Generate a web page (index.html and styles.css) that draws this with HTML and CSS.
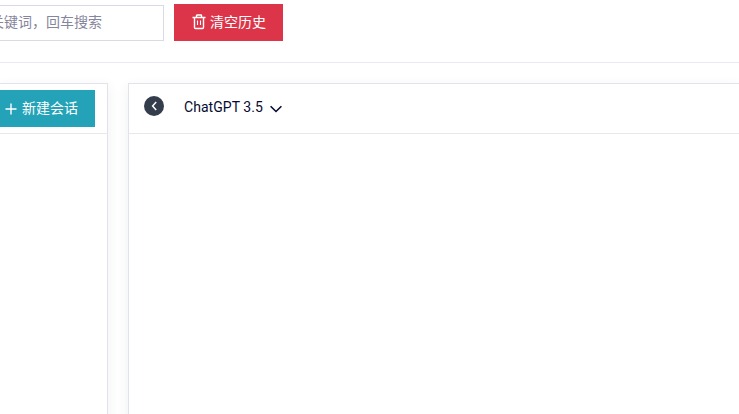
FILE: index.html
```
<!DOCTYPE html>
<html lang="zh-CN">
<head>
<meta charset="utf-8">
<title>ChatGPT</title>
<link rel="stylesheet" href="styles.css">
</head>
<body>
<header class="toolbar">
  <div class="search"><span class="placeholder">关键词，回车搜索</span></div>
  <button class="btn btn-danger">
    <svg class="icon-trash" viewBox="0 0 14 16" fill="none" stroke="currentColor"><path d="M.5 3.5h13M4.5 3.3V1.5q0-.5.5-.5h4q.5 0 .5.5v1.8M2.5 4v9.5q0 1 1 1h7q1 0 1-1V4" stroke-width="1.4"/><path d="M5.5 6.5V11M8.5 6.5V11" stroke-width="1.1"/></svg>
    <span>清空历史</span>
  </button>
</header>
<main class="content">
  <section class="panel sessions">
    <div class="panel-header">
      <button class="btn btn-info">
        <svg class="icon-plus" viewBox="0 0 12 12" fill="none" stroke="currentColor"><path d="M6 .5v11M.5 6h11" stroke-width="1.4"/></svg>
        <span>新建会话</span>
      </button>
    </div>
  </section>
  <section class="panel chat">
    <div class="panel-header">
      <svg class="icon-back" viewBox="0 0 20 20" fill="none"><circle cx="10" cy="10" r="10" fill="#343d4c"/><path d="M12.2 6 8.6 10l3.6 4" stroke="#fff" stroke-width="1.5"/></svg>
      <span class="model">ChatGPT 3.5</span>
      <svg class="icon-down" viewBox="0 0 12 8" fill="none"><path d="m.6 1.2 5.4 5.3 5.4-5.3" stroke="#060c30" stroke-width="1.6"/></svg>
    </div>
  </section>
</main>
</body>
</html>
```
FILE: styles.css
```
* { box-sizing: border-box; }
body {
  display: flex;
  flex-direction: column;
  margin: 0;
  height: 414px;
  overflow: hidden;
  background: #fff;
  color: #060c30;
  font: 14px/20px Roboto, "Noto Sans CJK SC", sans-serif;
}
svg { display: block; flex: none; }
.toolbar {
  display: flex;
  flex: none;
  gap: 10px;
  height: 63px;
  padding-top: 4px;
  border-bottom: 1px solid #e9eaf1;
}
.search {
  display: flex;
  align-items: center;
  justify-content: flex-end;
  width: 164px;
  height: 36px;
  margin-top: 1px;
  padding-right: 61px;
  border: 1px solid #d8dbe6;
  border-left: 0;
  color: #85859c;
  white-space: nowrap;
}
.placeholder { padding-bottom: 2px; }
.btn {
  display: flex;
  align-items: center;
  height: 37px;
  padding: 0;
  border: 0;
  color: #fff;
  font: inherit;
  white-space: nowrap;
}
.btn span { padding-bottom: 1px; }
.btn-danger { width: 109px; padding-left: 18px; gap: 4px; background: #dc3549; }
.icon-trash { width: 14px; height: 16px; margin-bottom: 1px; }
.btn-info { width: 95px; padding-left: 5px; gap: 5px; background: #23a2b8; }
.icon-plus { width: 12px; height: 12px; }
.content { display: flex; flex: 1; gap: 20px; padding-top: 20px; }
.panel {
  border: 1px solid #e1e2ec;
  border-bottom: 0;
  background: #fff;
  box-shadow: 0 4px 12px rgba(45, 60, 90, .08);
}
.panel-header {
  display: flex;
  align-items: center;
  height: 50px;
  border-bottom: 1px solid #e7e8ee;
}
.sessions { width: 108px; border-left: 0; }
.sessions, .chat { margin-bottom: -20px; }
.chat { flex: 1; border-right: 0; }
.chat .panel-header { padding: 0 0 3px 15px; }
.icon-back { width: 20px; height: 20px; margin-bottom: 2px; }
.model { margin-left: 20px; letter-spacing: .05px; }
.icon-down { width: 12px; height: 8px; margin: 4px 0 0 7px; }
```
